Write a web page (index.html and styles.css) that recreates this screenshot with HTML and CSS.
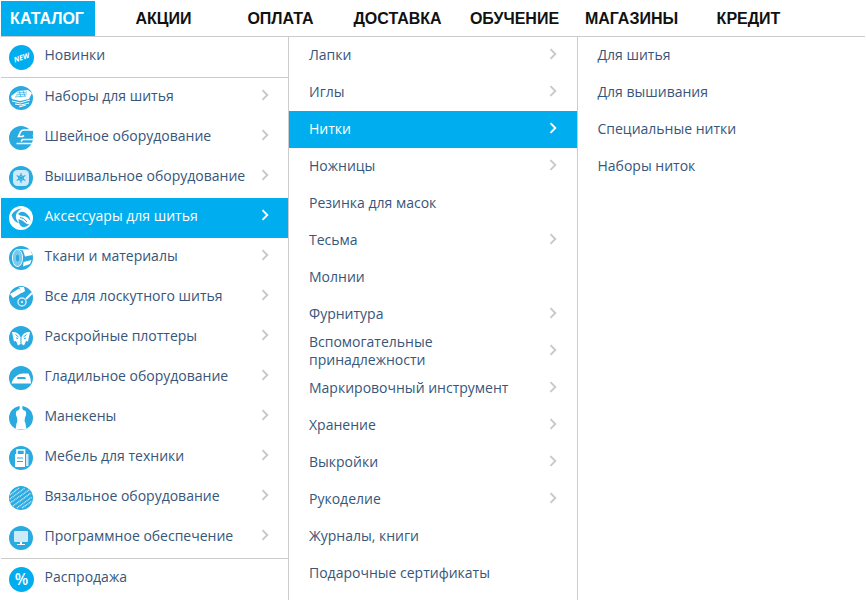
FILE: index.html
```html
<!DOCTYPE html>
<html lang="ru">
<head>
<meta charset="utf-8">
<title>Каталог</title>
<link rel="stylesheet" href="styles.css">
</head>
<body>
<svg class="defs" width="0" height="0" aria-hidden="true">
  <symbol id="chev" viewBox="0 0 8 12"><path d="M1.5 1.2 6.300 6 1.5 10.800" fill="none" stroke="currentColor" stroke-width="1.900"/></symbol>
</svg>
<div class="page">
  <nav class="nav">
    <a class="tab">КАТАЛОГ</a>
    <a class="nav-item">АКЦИИ</a>
    <a class="nav-item">ОПЛАТА</a>
    <a class="nav-item">ДОСТАВКА</a>
    <a class="nav-item">ОБУЧЕНИЕ</a>
    <a class="nav-item">МАГАЗИНЫ</a>
    <a class="nav-item">КРЕДИТ</a>
  </nav>
  <div class="cols">
    <div class="col col-main">
      <div class="row row-promo row-first">
        <svg class="ico" viewBox="0 0 24 24"><circle cx="12" cy="12" r="12" fill="#00aeef"/><text x="12" y="14.500" class="new" transform="rotate(-18 12 12)">NEW</text></svg>
        <span class="label">Новинки</span>
      </div>
      <div class="row">
        <svg class="ico" viewBox="0 0 24 24"><circle cx="12" cy="12" r="12" fill="#29abe2"/><path d="M2 10 9 5l10-1 4 3-3 6-9 2-8-2z" fill="#fff"/><path d="M8 7l10-1M7 9l11-1M6 11l11-1M10 5l2 6M14 4.500l2 6" stroke="#29abe2" stroke-width=".7"/><path d="M3 15l8 2 10-3M6 18l6 1 8-2M10 21l7-2" stroke="#fff" stroke-width="1" fill="none"/></svg>
        <span class="label">Наборы для шитья</span>
        <svg class="chev"><use href="#chev"/></svg>
      </div>
      <div class="row">
        <svg class="ico" viewBox="0 0 24 24"><circle cx="12" cy="12" r="12" fill="#29abe2"/><path d="M24 4.500H15Q12.500 4.500 11.500 7L10.500 9.500 13 9.800 15 9H24V4.500z" fill="#29abe2"/><path d="M24 4H15Q12 4 11 7L9.500 10.500H13.500L15 9.500M24 13.500H13.500L12 15.500M24 17.500H7.500" fill="none" stroke="#fff" stroke-width="1.700"/></svg>
        <span class="label">Швейное оборудование</span>
        <svg class="chev"><use href="#chev"/></svg>
      </div>
      <div class="row">
        <svg class="ico" viewBox="0 0 24 24"><circle cx="12" cy="12" r="12" fill="#29abe2"/><rect x="4" y="4" width="16" height="16" rx="4.500" fill="#cdeaf8"/><path d="M12 7v10M7.700 9.500l8.600 5M16.300 9.500l-8.600 5" stroke="#29abe2" stroke-width="1.100"/><circle cx="12" cy="12" r="2.500" fill="none" stroke="#29abe2"/></svg>
        <span class="label">Вышивальное оборудование</span>
        <svg class="chev"><use href="#chev"/></svg>
      </div>
      <div class="row row-active">
        <svg class="ico" viewBox="0 0 24 24"><circle cx="12" cy="12" r="12" fill="#fff"/><path d="M2.500 9Q6 3 13 2.500 8 5 7 9 6 13 10 17 4.500 16 2.500 9zM9 8q3-3.500 7-1.500 5 3 5.500 8.500-3.500-5-7.500-5-3 0-5-2zM9.500 13q4 1 7 4 2 2 4 1-3 4-7 3-4-2-4-8z" fill="#29abe2"/><path d="M11 11.500q4 0 7 4.500" stroke="#29abe2" fill="none"/></svg>
        <span class="label">Аксессуары для шитья</span>
        <svg class="chev"><use href="#chev"/></svg>
      </div>
      <div class="row">
        <svg class="ico" viewBox="0 0 24 24"><circle cx="12" cy="12" r="12" fill="#29abe2"/><path d="M8 3 21 3.500 23.500 9 16 10.500 14 4.500z" fill="#fff"/><path d="M14.500 16 22.500 14 21 18 14 20.500z" fill="#fff"/><ellipse cx="8.500" cy="12" rx="5.500" ry="9" fill="#fff"/><ellipse cx="8.500" cy="12" rx="4.700" ry="8.200" fill="#7cc9ec"/><ellipse cx="8.500" cy="12" rx="1.600" ry="3.500" fill="#29abe2"/></svg>
        <span class="label">Ткани и материалы</span>
        <svg class="chev"><use href="#chev"/></svg>
      </div>
      <div class="row">
        <svg class="ico" viewBox="0 0 24 24"><circle cx="12" cy="12" r="12" fill="#29abe2"/><path d="M1 8 6 5l3 4-5 3zM9 9 6 5l4-2.500 3 4zM10 1h5l1 4-3 2z" fill="#fff"/><path d="M23 7 17 13" stroke="#fff" stroke-width="2"/><circle cx="13" cy="16" r="4" fill="none" stroke="#cdeaf8" stroke-width="1.500"/><circle cx="13" cy="16" r="1.200" fill="#cdeaf8"/></svg>
        <span class="label">Все для лоскутного шитья</span>
        <svg class="chev"><use href="#chev"/></svg>
      </div>
      <div class="row">
        <svg class="ico" viewBox="0 0 24 24"><circle cx="12" cy="12" r="12" fill="#29abe2"/><path d="M3 6q6-.5 8.500 5v7L9 19.500 7 15l-2 .5zM21 6q-6-.5-8.500 5v7l2.500 1.500 2-4.500 2 .5z" fill="#fff"/><path d="M6.500 8.500l3 2.500M7 12l2 .5M17.500 8.500l-3 2.500M17 12l-2 .5" stroke="#29abe2"/></svg>
        <span class="label">Раскройные плоттеры</span>
        <svg class="chev"><use href="#chev"/></svg>
      </div>
      <div class="row">
        <svg class="ico" viewBox="0 0 24 24"><circle cx="12" cy="12" r="12" fill="#29abe2"/><path d="M2.500 17.500Q4 12 8 9.500 10 7.500 14 7.500h5.500q2.500 4 2.500 10z" fill="#fff"/><path d="M8.500 11h7q1 .2 1.500 2h-9z" fill="#29abe2"/></svg>
        <span class="label">Гладильное оборудование</span>
        <svg class="chev"><use href="#chev"/></svg>
      </div>
      <div class="row">
        <svg class="ico" viewBox="0 0 24 24"><circle cx="12" cy="12" r="12" fill="#29abe2"/><path d="M10.700 0h2.600v2.500q.2 1.500 3.200 2.500 1.500 3-.5 6.500-1 3 .5 6l1 6H6.500l1-6q1.500-3 .5-6Q6 8 7.500 5q3-1 3.200-2.500z" fill="#fff"/></svg>
        <span class="label">Манекены</span>
        <svg class="chev"><use href="#chev"/></svg>
      </div>
      <div class="row">
        <svg class="ico" viewBox="0 0 24 24"><circle cx="12" cy="12" r="12" fill="#29abe2"/><path d="M8 8V4h7.500v4" fill="none" stroke="#fff" stroke-width="1.600"/><rect x="6" y="8" width="10" height="13" fill="#fff"/><rect x="17" y="8" width="2.500" height="12" fill="#cdeaf8"/><path d="M8 12h6M8 15.500h6" stroke="#29abe2"/></svg>
        <span class="label">Мебель для техники</span>
        <svg class="chev"><use href="#chev"/></svg>
      </div>
      <div class="row">
        <svg class="ico" viewBox="0 0 24 24"><circle cx="12" cy="12" r="12" fill="#29abe2"/><path d="M1 9 10 2M1 13 16 2M1 17 20 4M4 20 22 7M8 22 23 11M13 22 23 15" stroke="#cdeaf8" stroke-width="1.500" stroke-dasharray="1 .7" fill="none"/></svg>
        <span class="label">Вязальное оборудование</span>
        <svg class="chev"><use href="#chev"/></svg>
      </div>
      <div class="row">
        <svg class="ico" viewBox="0 0 24 24"><circle cx="12" cy="12" r="12" fill="#29abe2"/><rect x="5" y="5" width="14" height="11" rx="1" fill="#cdeaf8"/><path d="M11 16h2v2h3v1H8v-1h3z" fill="#fff"/></svg>
        <span class="label">Программное обеспечение</span>
        <svg class="chev"><use href="#chev"/></svg>
      </div>
      <div class="row row-promo row-last">
        <svg class="ico" viewBox="0 0 24 24"><circle cx="12" cy="12" r="12" fill="#00aeef"/><text x="12" y="17" class="pct">%</text></svg>
        <span class="label">Распродажа</span>
      </div>
    </div>
    <div class="col col-sub">
      <div class="sub-row"><span class="label">Лапки</span><svg class="chev"><use href="#chev"/></svg></div>
      <div class="sub-row"><span class="label">Иглы</span><svg class="chev"><use href="#chev"/></svg></div>
      <div class="sub-row row-active"><span class="label">Нитки</span><svg class="chev"><use href="#chev"/></svg></div>
      <div class="sub-row"><span class="label">Ножницы</span><svg class="chev"><use href="#chev"/></svg></div>
      <div class="sub-row"><span class="label">Резинка для масок</span></div>
      <div class="sub-row"><span class="label">Тесьма</span><svg class="chev"><use href="#chev"/></svg></div>
      <div class="sub-row"><span class="label">Молнии</span></div>
      <div class="sub-row"><span class="label">Фурнитура</span><svg class="chev"><use href="#chev"/></svg></div>
      <div class="sub-row"><span class="label">Вспомогательные принадлежности</span><svg class="chev"><use href="#chev"/></svg></div>
      <div class="sub-row"><span class="label">Маркировочный инструмент</span><svg class="chev"><use href="#chev"/></svg></div>
      <div class="sub-row"><span class="label">Хранение</span><svg class="chev"><use href="#chev"/></svg></div>
      <div class="sub-row"><span class="label">Выкройки</span><svg class="chev"><use href="#chev"/></svg></div>
      <div class="sub-row"><span class="label">Рукоделие</span><svg class="chev"><use href="#chev"/></svg></div>
      <div class="sub-row"><span class="label">Журналы, книги</span></div>
      <div class="sub-row"><span class="label">Подарочные сертификаты</span></div>
    </div>
    <div class="col col-leaf">
      <div class="sub-row"><span class="label">Для шитья</span></div>
      <div class="sub-row"><span class="label">Для вышивания</span></div>
      <div class="sub-row"><span class="label">Специальные нитки</span></div>
      <div class="sub-row"><span class="label">Наборы ниток</span></div>
    </div>
  </div>
</div>
</body>
</html>
```
FILE: styles.css
```css
* { box-sizing: border-box; }
html, body { margin: 0; height: 100%; background: #fff; overflow: hidden; }
.defs { position: absolute; }
.page { width: 865px; padding-left: 1px; height: 600px; display: flex; flex-direction: column; font-family: "Open Sans", sans-serif; }
.nav { display: flex; height: 37px; padding-top: 1px; border-bottom: 1px solid #ccc; font: bold 16px/35px "Liberation Sans", Arial, sans-serif; color: #111; }
.tab { width: 94px; padding-right: 2px; background: #00aeef; color: #fff; text-align: center; margin-right: 10px; }
.nav-item { width: 117px; text-align: center; }
.cols { display: flex; flex: 1; }
.col { border-right: 1px solid #ccc; }
.col-main { width: 288px; }
.col-sub { width: 289px; }
.col-leaf { flex: 1; border-right: 0; }
.label { font-size: 14px; line-height: 18px; color: #37567a; position: relative; top: -1px; }
.row { display: flex; align-items: center; height: 40px; padding: 0 19px 0 8px; }
.row .label { top: -2px; }
.row-promo { height: 41px; }
.row-first { border-bottom: 1px solid #ccc; }
.row-last { border-top: 1px solid #ccc; }
.ico { width: 24px; height: 24px; flex: none; margin-right: 11.500px; }
.row-promo .ico { width: 25px; height: 25px; margin-right: 10.500px; }
.chev { width: 8px; height: 12px; margin-left: auto; flex: none; color: #c8c8c8; position: relative; top: -2px; }
.row .chev { top: -3px; }
.sub-row { display: flex; align-items: center; height: 37px; padding: 0 20px; }
.sub-row .label { max-width: 210px; }
.col-leaf .sub-row { padding-left: 19.500px; }
.row-active { background: #00aeef; }
.row-active .label { color: #fff; }
.row-active .chev { color: #fff; }
.new { font: italic bold 7px "Open Sans", sans-serif; fill: #fff; text-anchor: middle; }
.pct { font: 600 15px "Open Sans", sans-serif; fill: #fff; text-anchor: middle; }
```
